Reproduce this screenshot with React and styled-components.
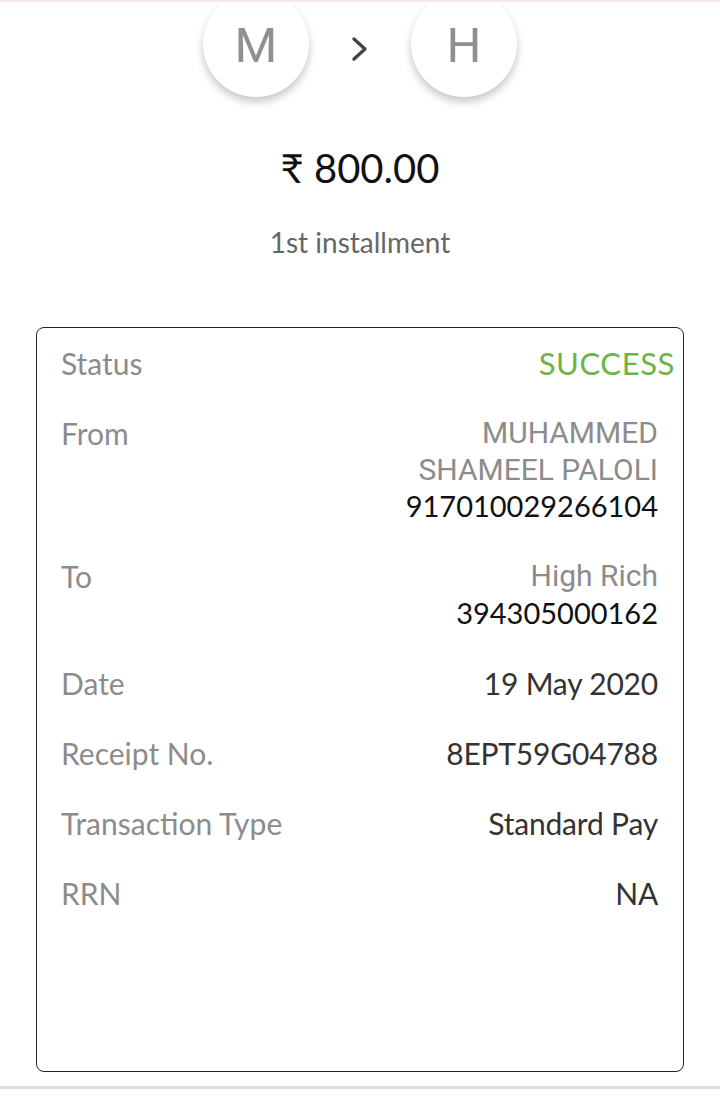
import React from 'react'
import styled, { createGlobalStyle } from 'styled-components'

const GlobalStyle = createGlobalStyle`
  * { box-sizing: border-box; }
  body {
    margin: 0;
    background: #fff;
    font-family: Lato, "Noto Sans", sans-serif;
  }
`

const rows = [
  { label: 'Status', lines: [{ text: 'SUCCESS', tone: 'success' }], edge: true },
  {
    label: 'From',
    lines: [
      { text: 'MUHAMMED', tone: 'name' },
      { text: 'SHAMEEL PALOLI', tone: 'name' },
      { text: '917010029266104', tone: 'number' },
    ],
  },
  {
    label: 'To',
    lines: [
      { text: 'High Rich', tone: 'name' },
      { text: '394305000162', tone: 'number' },
    ],
  },
  { label: 'Date', lines: [{ text: '19 May 2020', tone: 'plain' }] },
  { label: 'Receipt No.', lines: [{ text: '8EPT59G04788', tone: 'plain' }] },
  { label: 'Transaction Type', lines: [{ text: 'Standard Pay', tone: 'plain' }] },
  { label: 'RRN', lines: [{ text: 'NA', tone: 'plain' }] },
]

const App = () => {
  return (
    <Page>
      <GlobalStyle />
      <Parties>
        <Avatar>M</Avatar>
        <Chevron width="22" height="30" viewBox="0 0 22 30">
          <path d="M5 5 L16 15 L5 25" fill="none" stroke="#444" strokeWidth="3.4" strokeLinecap="round" strokeLinejoin="round" />
        </Chevron>
        <Avatar>H</Avatar>
      </Parties>
      <Amount>₹ 800.00</Amount>
      <Note>1st installment</Note>
      <Card>
        {rows.map((row) => (
          <Row key={row.label}>
            <Label>{row.label}</Label>
            <Values $edge={row.edge}>
              {row.lines.map((line) => (
                <Value key={line.text} $tone={line.tone}>{line.text}</Value>
              ))}
            </Values>
          </Row>
        ))}
      </Card>
      <Divider />
    </Page>
  )
}

const Page = styled.div`
  border-top: 2px solid #f6e6f6;
  min-height: 1109px;
  overflow: hidden;
`

const Parties = styled.div`
  display: flex;
  align-items: center;
  justify-content: center;
  gap: 40px;
  margin-top: -11px;
`

const Avatar = styled.div`
  width: 106px;
  height: 106px;
  border-radius: 50%;
  background: #fff;
  box-shadow: 0 5px 9px rgba(0, 0, 0, 0.22);
  display: flex;
  align-items: center;
  justify-content: center;
  font-family: Roboto, sans-serif;
  font-size: 49px;
  color: #909090;
  padding-top: 2px;
`

const Chevron = styled.svg`
  display: block;
  margin-top: 10px;
`

const Amount = styled.div`
  text-align: center;
  font-size: 40px;
  color: #111;
  margin-top: 47px;
  line-height: 48px;
`

const Note = styled.div`
  text-align: center;
  font-size: 28px;
  color: #666;
  margin-top: 33px;
  line-height: 34px;
`

const Card = styled.div`
  margin: 68px 36px 0 36px;
  height: 745px;
  border: 1.5px solid #222;
  border-radius: 8px;
  padding: 17px 25px 0 24px;
  display: flex;
  flex-direction: column;
  gap: 33.5px;
`

const Row = styled.div`
  display: flex;
  justify-content: space-between;
  align-items: flex-start;
  font-size: 30px;
  line-height: 36.5px;
`

const Label = styled.div`
  color: #8c8c8c;
`

const Values = styled.div`
  display: flex;
  flex-direction: column;
  align-items: flex-end;
  margin-right: ${(p) => (p.$edge ? '-17px' : '0')};
`

const toneStyles = {
  success: 'color: #6db446; font-size: 31px; letter-spacing: 0.6px;',
  name: 'color: #8c8c8c; font-family: Roboto, sans-serif;',
  number: 'color: #111; font-size: 29px;',
  plain: 'color: #333; letter-spacing: -0.2px;',
}

const Value = styled.div`
  ${(p) => toneStyles[p.$tone]}
`

const Divider = styled.div`
  height: 3px;
  background: #dedede;
  margin-top: 14px;
`

export default App
